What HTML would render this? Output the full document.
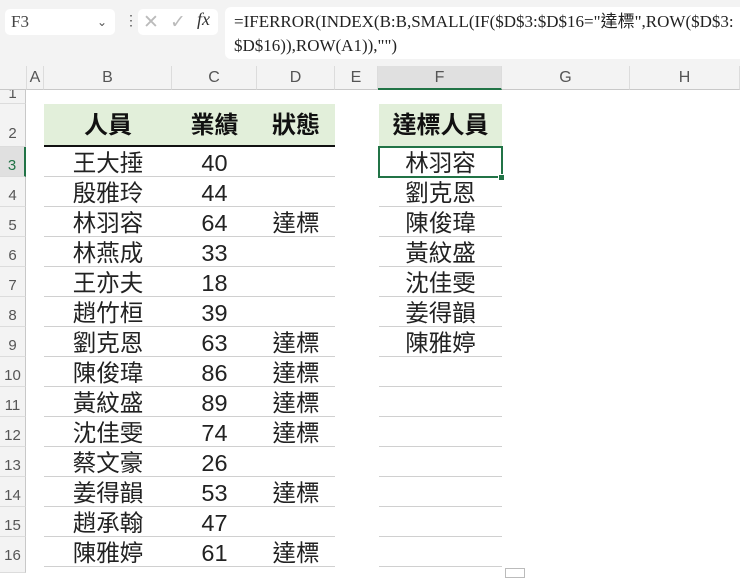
<!DOCTYPE html><html><head><meta charset="utf-8"><style>
body{margin:0;width:740px;height:573px;overflow:hidden;background:#fff;font-family:"Liberation Sans","Noto Sans CJK TC",sans-serif;position:relative}
.a{position:absolute}
.top{left:0;top:0;width:740px;height:66px;background:#f3f3f3}
.nb{left:5px;top:9px;width:110px;height:26px;background:#fff;border-radius:5px;font-family:"Liberation Serif",serif;font-size:17px;color:#444;line-height:26px;text-indent:6px}
.fb{left:225px;top:7px;width:520px;height:52px;background:#fff;border-radius:6px 0 0 6px;font-family:"Liberation Serif","Noto Sans CJK TC",serif;font-size:17px;color:#222;line-height:24px;padding:3px 0 0 9px;box-sizing:border-box;white-space:nowrap}
.ch{top:66px;height:24px;line-height:24px;text-align:center;font-size:16px;color:#555;background:#f3f3f3;border-right:1px solid #dcdcdc;border-bottom:1px solid #c8c8c8;box-sizing:border-box}
.rh{left:0;width:26px;text-align:center;font-size:15px;color:#555;background:#f3f3f3;border-bottom:1px solid #dcdcdc;border-right:1px solid #c8c8c8;box-sizing:border-box}
.c{font-size:23.5px;color:#222;text-align:center;height:30px;line-height:32px}
.h{font-size:24px;font-weight:bold;color:#111;text-align:center;line-height:44px}
.ln{height:1px;background:#d0d0d0}
</style></head><body>
<div class="a top"></div>
<div class="a nb">F3<span style="position:absolute;right:8px;top:0;font-family:'DejaVu Sans';font-size:12px;color:#555">&#8964;</span></div>
<div class="a" style="left:124px;top:12px;color:#555;font-size:14px">&#8942;</div>
<div class="a" style="left:138px;top:9px;width:80px;height:26px;background:#fff;border-radius:5px"></div>
<div class="a" style="left:143px;top:11px;color:#bbb;font-size:19px;font-family:'DejaVu Sans'">&#x2715;</div>
<div class="a" style="left:170px;top:11px;color:#bbb;font-size:19px;font-family:'DejaVu Sans'">&#x2713;</div>
<div class="a" style="left:197px;top:9px;color:#333;font-size:18px;font-style:italic;font-family:'Liberation Serif'"><i>fx</i></div>
<div class="a fb">=IFERROR(INDEX(B:B,SMALL(IF($D$3:$D$16="達標",ROW($D$3:<br>$D$16)),ROW(A1)),"")</div>
<div class="a ch" style="left:0;width:27px"></div>
<div class="a ch" style="left:27px;width:17px">A</div>
<div class="a ch" style="left:44px;width:128px">B</div>
<div class="a ch" style="left:172px;width:85px">C</div>
<div class="a ch" style="left:257px;width:78px">D</div>
<div class="a ch" style="left:335px;width:43px">E</div>
<div class="a ch" style="left:378px;width:124px;background:#e0e0e0;border-bottom:2px solid #217346">F</div>
<div class="a ch" style="left:502px;width:128px">G</div>
<div class="a ch" style="left:630px;width:110px">H</div>
<div class="a rh" style="top:90px;height:14px;line-height:8px;overflow:hidden">1</div>
<div class="a rh" style="top:104px;height:43px;line-height:60px">2</div>
<div class="a rh" style="top:147px;height:30px;line-height:38px;color:#217346;background:#e0e0e0;border-right:2px solid #217346">3</div>
<div class="a rh" style="top:177px;height:30px;line-height:38px">4</div>
<div class="a rh" style="top:207px;height:30px;line-height:38px">5</div>
<div class="a rh" style="top:237px;height:30px;line-height:38px">6</div>
<div class="a rh" style="top:267px;height:30px;line-height:38px">7</div>
<div class="a rh" style="top:297px;height:30px;line-height:38px">8</div>
<div class="a rh" style="top:327px;height:30px;line-height:38px">9</div>
<div class="a rh" style="top:357px;height:30px;line-height:38px">10</div>
<div class="a rh" style="top:387px;height:30px;line-height:38px">11</div>
<div class="a rh" style="top:417px;height:30px;line-height:38px">12</div>
<div class="a rh" style="top:447px;height:30px;line-height:38px">13</div>
<div class="a rh" style="top:477px;height:30px;line-height:38px">14</div>
<div class="a rh" style="top:507px;height:30px;line-height:38px">15</div>
<div class="a rh" style="top:537px;height:36px;line-height:38px">16</div>
<div class="a" style="left:44px;top:104px;width:291px;height:42px;background:#e2efda"></div>
<div class="a" style="left:44px;top:145px;width:291px;height:2px;background:#111"></div>
<div class="a h" style="left:44px;top:104px;width:128px">人員</div>
<div class="a h" style="left:172px;top:104px;width:85px">業績</div>
<div class="a h" style="left:257px;top:104px;width:78px">狀態</div>
<div class="a" style="left:379px;top:104px;width:123px;height:42px;background:#e2efda"></div>
<div class="a h" style="left:379px;top:104px;width:123px">達標人員</div>
<div id="rows"></div>
<script>
var d=[["王大捶",40,""],["殷雅玲",44,""],["林羽容",64,"達標"],["林燕成",33,""],["王亦夫",18,""],["趙竹桓",39,""],["劉克恩",63,"達標"],["陳俊瑋",86,"達標"],["黃紋盛",89,"達標"],["沈佳雯",74,"達標"],["蔡文豪",26,""],["姜得韻",53,"達標"],["趙承翰",47,""],["陳雅婷",61,"達標"]];
var f=["林羽容","劉克恩","陳俊瑋","黃紋盛","沈佳雯","姜得韻","陳雅婷"];
var h="";
d.forEach(function(r,i){var t=147+i*30;
h+='<div class="a c" style="left:44px;top:'+t+'px;width:128px">'+r[0]+'</div><div class="a c" style="left:172px;top:'+t+'px;width:85px">'+r[1]+'</div><div class="a c" style="left:257px;top:'+t+'px;width:78px">'+r[2]+'</div>';
h+='<div class="a ln" style="left:44px;top:'+(t+29)+'px;width:291px"></div><div class="a ln" style="left:379px;top:'+(t+29)+'px;width:123px"></div>';
if(f[i])h+='<div class="a c" style="left:379px;top:'+t+'px;width:123px">'+f[i]+'</div>';});
document.getElementById("rows").innerHTML=h;
</script>
<div class="a" style="left:378px;top:146px;width:121px;height:28px;border:2px solid #217346"></div>
<div class="a" style="left:498px;top:174px;width:5px;height:5px;background:#217346;border:1px solid #fff"></div>
<div class="a" style="left:505px;top:568px;width:18px;height:8px;border:1px solid #bbb;background:#fff"></div>
</body></html>
